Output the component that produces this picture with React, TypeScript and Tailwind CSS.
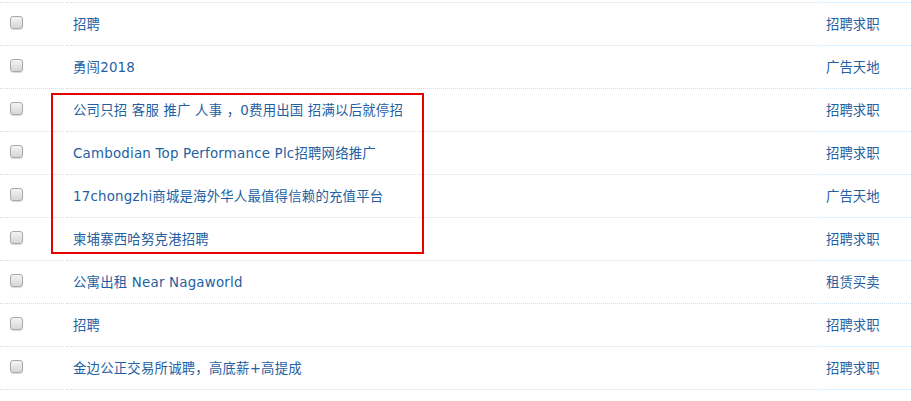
const rows: { title: string; cat: string }[] = [
  { title: '招聘', cat: '招聘求职' },
  { title: '勇闯2018', cat: '广告天地' },
  { title: '公司只招 客服 推广 人事 ，0费用出国 招满以后就停招', cat: '招聘求职' },
  { title: 'Cambodian Top Performance Plc招聘网络推广', cat: '招聘求职' },
  { title: '17chongzhi商城是海外华人最值得信赖的充值平台', cat: '广告天地' },
  { title: '柬埔寨西哈努克港招聘', cat: '招聘求职' },
  { title: '公寓出租 Near Nagaworld', cat: '租赁买卖' },
  { title: '招聘', cat: '招聘求职' },
  { title: '金边公正交易所诚聘，高底薪+高提成', cat: '招聘求职' },
];

function Checkbox() {
  return (
    <span className="block h-[13px] w-[13px] rounded-[3px] border border-[#a9a9a9] bg-gradient-to-b from-[#f4f4f4] to-[#d6d6d6] shadow-[0_1px_1px_rgba(0,0,0,0.15)]" />
  );
}

export default function App() {
  return (
    <div
      className="relative h-[401px] w-[911px] overflow-hidden bg-white text-[13.4px] text-[#1f5fa2]"
      style={{ fontFamily: '"DejaVu Sans", "Noto Sans CJK SC", sans-serif' }}
    >
      <div className="flex h-[3px]">
        <div className="w-[64px] border-b border-dotted border-[#c6e0f4]" />
        <div className="ml-[2px] w-[752px] border-b border-dotted border-[#c6e0f4]" />
        <div className="ml-[2px] flex-1 border-b border-dotted border-[#c6e0f4]" />
      </div>
      {rows.map((r, i) => (
        <div key={i} className="flex h-[43px]">
          <div className="flex w-[64px] items-center border-b border-dotted border-[#c6e0f4] pl-[10px] pb-[4px]">
            <Checkbox />
          </div>
          <div className="ml-[2px] flex w-[752px] items-center border-b border-dotted border-[#c6e0f4] pl-[7px] pt-[2px]">
            <span className="whitespace-nowrap tracking-[0.2px]">{r.title}</span>
          </div>
          <div className="ml-[2px] flex flex-1 items-center border-b border-dotted border-[#c6e0f4] pl-[6px] pt-[2px]">
            <span className="whitespace-nowrap">{r.cat}</span>
          </div>
        </div>
      ))}
      <div className="pointer-events-none absolute left-[51px] top-[93px] h-[161px] w-[373px] border-2 border-[#e60000]" />
    </div>
  );
}
